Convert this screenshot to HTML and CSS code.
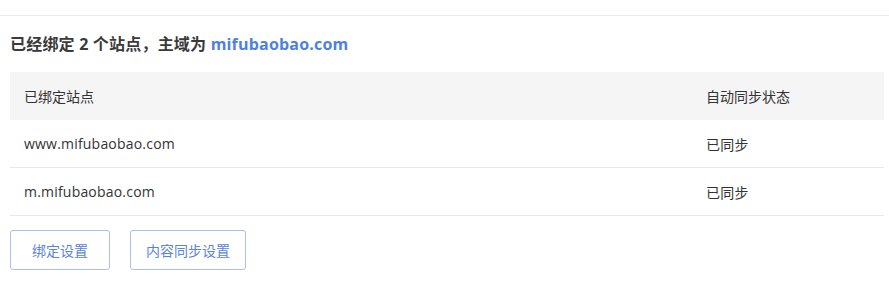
FILE: index.html
```html
<!DOCTYPE html>
<html>
  <head>
    <title>站点绑定</title>
    <link rel="stylesheet" href="styles.css">
  </head>
  <body>
    <div class="topbar"></div>
    <div class="container">
      <h3 class="summary">
        已经绑定 2 个站点，主域为 <a class="domain" href="#">mifubaobao.com</a>
      </h3>

      <table class="sites">
        <thead>
          <tr>
            <th class="col-site">已绑定站点</th>
            <th>自动同步状态</th>
          </tr>
        </thead>
        <tbody>
          <tr>
            <td>www.mifubaobao.com</td>
            <td>已同步</td>
          </tr>
          <tr>
            <td>m.mifubaobao.com</td>
            <td>已同步</td>
          </tr>
        </tbody>
      </table>

      <div class="actions">
        <button class="btn">绑定设置</button>
        <button class="btn">内容同步设置</button>
      </div>
    </div>
  </body>
</html>
```

FILE: styles.css
```css
* {
  box-sizing: border-box;
  margin: 0;
  padding: 0;
}

body {
  font-family: "Open Sans", "Noto Sans CJK SC", sans-serif;
  background: #ffffff;
  color: #333333;
  width: 889px;
  height: 285px;
  overflow: hidden;
}

.topbar {
  height: 16px;
  border-bottom: 1px solid #ebebeb;
}

.container {
  padding: 0 5px 0 10px;
}

.summary {
  font-size: 16px;
  font-weight: bold;
  color: #3a3a3a;
  line-height: 24px;
  letter-spacing: 0.2px;
  margin-top: 16px;
  margin-bottom: 16px;
}

.domain {
  color: #4d7fe6;
  text-decoration: none;
}

.sites {
  width: 100%;
  border-collapse: separate;
  border-spacing: 0;
  font-size: 14px;
}

.sites th,
.sites td {
  height: 48px;
  padding: 0 14px;
  text-align: left;
  font-weight: normal;
  color: #333333;
}

.sites th {
  background-color: #f5f5f5;
}

.sites td {
  letter-spacing: 0.2px;
  border-bottom: 1px solid #e8e8e8;
}

.col-site {
  width: 682px;
}

.actions {
  display: flex;
  gap: 20px;
  margin-top: 14px;
}

.btn {
  min-width: 100px;
  height: 40px;
  padding: 0 15px;
  font-family: "Noto Sans CJK SC", sans-serif;
  font-size: 14px;
  color: #5b84dc;
  background: #ffffff;
  border: 1px solid #aabfef;
  border-radius: 3px;
  cursor: pointer;
}
```
